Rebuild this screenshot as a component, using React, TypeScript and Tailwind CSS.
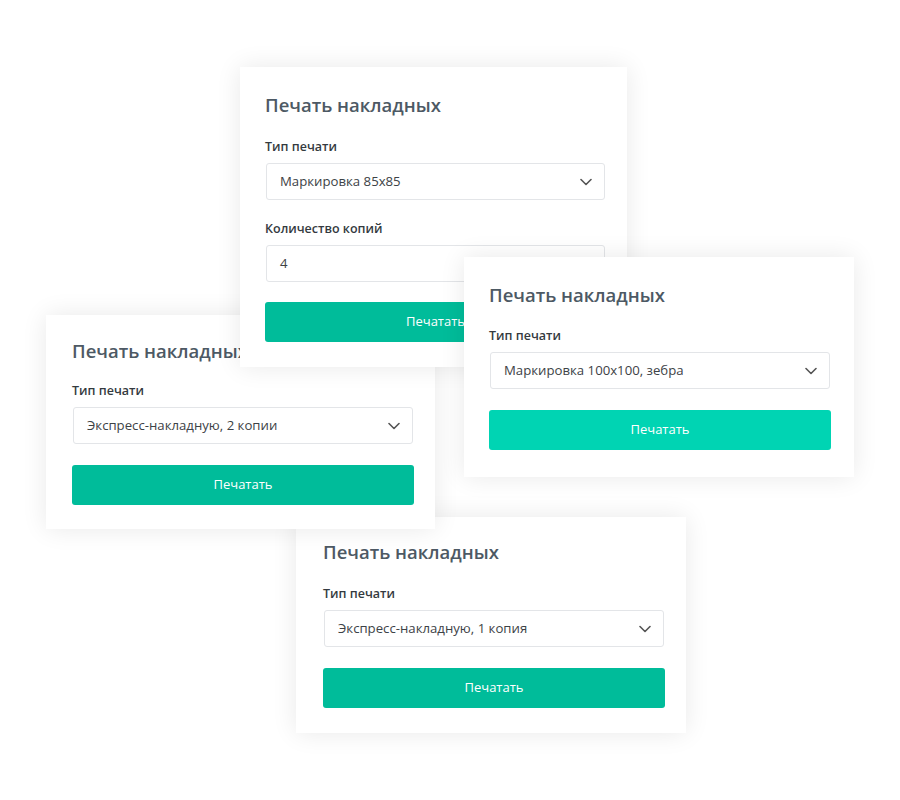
import React from "react";

function Chevron() {
  return (
    <svg width="12" height="8" viewBox="0 0 12 8" fill="none" className="shrink-0">
      <path d="M1 1.5L6 6.5L11 1.5" stroke="#555" strokeWidth="1.6" strokeLinecap="round" strokeLinejoin="round" />
    </svg>
  );
}

function Field({ value, select = true }: { value: string; select?: boolean }) {
  return (
    <div className="h-[37px] mx-px border border-[#e3e5e8] rounded-[3px] bg-white flex items-center justify-between pl-[13px] pr-[12px] text-[13.2px] text-[#3d4246]">
      <span>{value}</span>
      {select && <Chevron />}
    </div>
  );
}

function Card({
  className,
  fields,
  gap,
  button = "bg-[#00bc9a]",
}: {
  className: string;
  gap: string;
  fields: { label: string; value: string; select?: boolean }[];
  button?: string;
}) {
  return (
    <div className={"absolute bg-white shadow-[0_0_24px_rgba(0,0,0,0.09)] flex flex-col " + className}>
      <div className="text-[18.5px] leading-[24px] font-semibold text-[#4d5964]">Печать накладных</div>
      {fields.map((f, i) => (
        <div key={i} className={"flex flex-col " + (i === 0 ? gap : "mt-[20px]")}>
          <div className="text-[12.5px] leading-[18px] font-semibold text-[#343a40] mb-[7px]">{f.label}</div>
          <Field value={f.value} select={f.select !== false} />
        </div>
      ))}
      <div className={"h-[40px] rounded-[3px] flex items-center justify-center text-white text-[13px] " + (fields.length > 1 ? "mt-[20px] " : "mt-[21px] ") + button}>
        Печатать
      </div>
    </div>
  );
}

export default function App() {
  return (
    <div className="relative w-[900px] h-[800px] bg-white overflow-hidden" style={{ fontFamily: '"Open Sans", "Noto Sans", sans-serif' }}>
      <Card
        className="left-[296px] top-[517px] w-[390px] pl-[27px] pr-[21px] pt-[23px] pb-[25px]"
        gap="mt-[21px]"
        fields={[{ label: "Тип печати", value: "Экспресс-накладную, 1 копия" }]}
      />
      <Card
        className="left-[46px] top-[315px] w-[389px] pl-[26px] pr-[21px] pt-[24px] pb-[24px]"
        gap="mt-[19px]"
        fields={[{ label: "Тип печати", value: "Экспресс-накладную, 2 копии" }]}
      />
      <Card
        className="left-[240px] top-[67px] w-[387px] pl-[25px] pr-[21px] pt-[26px] pb-[25px]"
        gap="mt-[21px]"
        fields={[
          { label: "Тип печати", value: "Маркировка 85x85" },
          { label: "Количество копий", value: "4", select: false },
        ]}
      />
      <Card
        className="left-[464px] top-[257px] w-[390px] pl-[25px] pr-[23px] pt-[26px] pb-[27px]"
        gap="mt-[20px]"
        fields={[{ label: "Тип печати", value: "Маркировка 100x100, зебра" }]}
        button="bg-[#00d4b3]"
      />
    </div>
  );
}
